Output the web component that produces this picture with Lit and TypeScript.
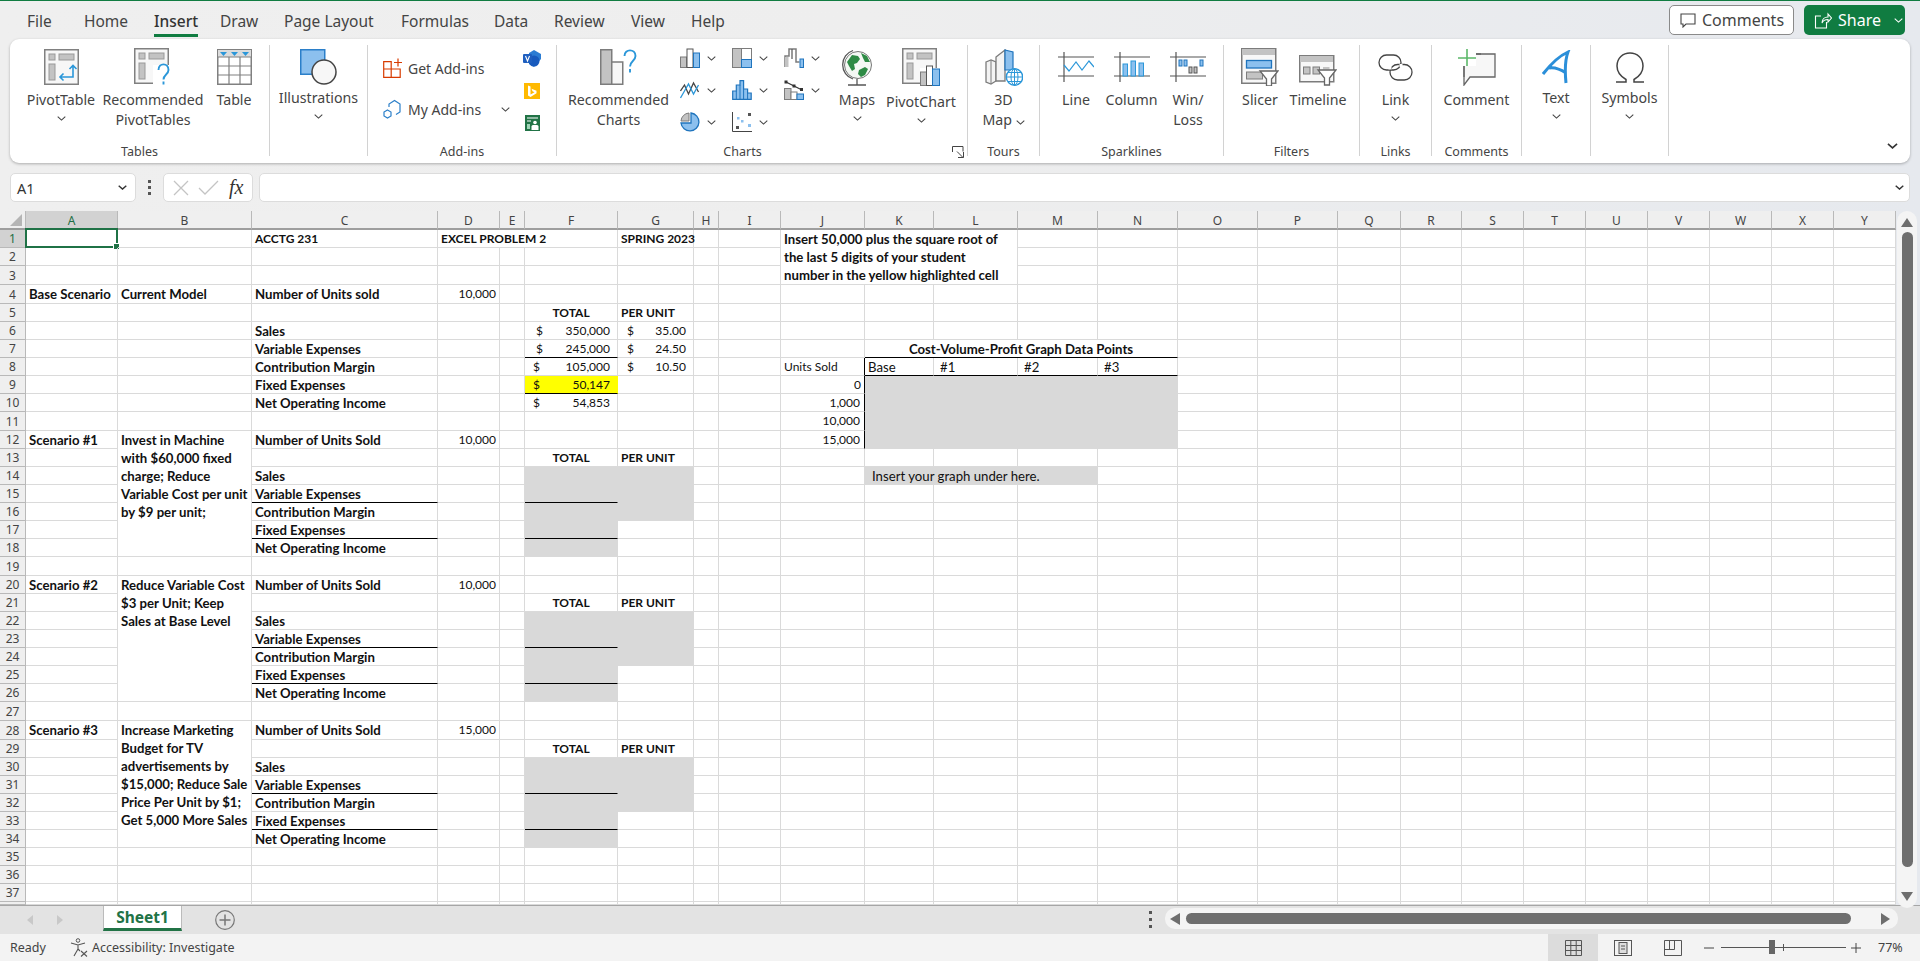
import { LitElement, html, svg, css, nothing } from 'lit';
import { customElement } from 'lit/decorators.js';

const GS = '#7c7c7c'; // icon grey stroke
const GF = '#c3c3c3'; // icon grey fill
const BS = '#1f74bd'; // icon blue stroke
const BF = '#8cc0ee'; // icon light blue

const chev = () => html`<svg class="chev" width="9" height="5" viewBox="0 0 9 5"><path d="M.7.7l3.8 3.4L8.3.7" fill="none" stroke="#444" stroke-width="1.1"/></svg>`;

const pivotBase = () => svg`
  <rect x=".75" y=".75" width="33.5" height="34.5" fill="#f7f7f7" stroke="#808080" stroke-width="1.5"/>
  <rect x="5" y="5" width="6" height="6" fill="${GF}" stroke="#999"/>
  <rect x="15" y="5" width="15" height="6" fill="${GF}" stroke="#999"/>
  <rect x="5" y="15" width="6" height="16" fill="${GF}" stroke="#999"/>`;

const icons: Record<string, () => unknown> = {
  pivot: () => html`<svg width="35" height="36" viewBox="0 0 35 36">${pivotBase()}
    <path d="M29 17v11H16M25.5 20l3.5-3.5 3.5 3.5M19.5 24.5l-3.5 3.500 3.5 3.5" fill="none" stroke="#2b97d9" stroke-width="1.6"/></svg>`,
  recPivot: () => html`<svg width="38" height="38" viewBox="0 0 38 38">${pivotBase()}
    <rect x="19" y="17" width="19" height="21" fill="#fff"/>
    <path d="M24.5 22c0-7.5 10-7.5 10 0 0 4.5-5 4.5-5 9.5M29.5 33.5v3" fill="none" stroke="#2b97d9" stroke-width="1.9"/></svg>`,
  table: () => html`<svg width="35" height="36" viewBox="0 0 35 36">
    <rect x=".75" y=".75" width="33.5" height="34.5" fill="#fff" stroke="#808080" stroke-width="1.5"/>
    <rect x="1" y="1" width="33" height="7" fill="#dcdcdc"/>
    <path d="M1 8h33M1 17h33M1 26h33M12 8v27M23 8v27" stroke="#808080" stroke-width="1.2"/>
    <path d="M3 3h7l-3.5 4zM14 3h7l-3.5 4zM25 3h7l-3.5 4z" fill="#2b97d9"/></svg>`,
  shapes: () => html`<svg width="37" height="36" viewBox="0 0 37 36">
    <rect x=".75" y=".75" width="24" height="24.5" fill="#8cc0ee" stroke="#2b7fc9" stroke-width="1.5"/>
    <circle cx="24" cy="23" r="12" fill="#f7f7f7" stroke="#444" stroke-width="1.5"/></svg>`,
  getAddins: () => html`<svg width="20" height="20" viewBox="0 0 20 20">
    <path d="M.7 3.7h7.5v15.600H.7zM8.2 11h9v8.300h-9M.7 11h7.5" fill="none" stroke="#d83b01" stroke-width="1.2"/>
    <path d="M15 .5v8M11 4.5h8" stroke="#d83b01" stroke-width="1.2"/></svg>`,
  myAddins: () => html`<svg width="20" height="20" viewBox="0 0 20 20">
    <path d="M6 8V5l5.5-3.5L17 5v8l-4 2.500" fill="none" stroke="#2b7fc9" stroke-width="1.2"/>
    <path d="M4.5 11l3.500 2v4l-3.500 2L1 17v-4z" fill="none" stroke="#2b7fc9" stroke-width="1.2"/></svg>`,
  visio: () => html`<svg width="18" height="17" viewBox="0 0 18 17">
    <path d="M6 3l5-3 7 4v5l-7 8-5-3z" fill="#2b7cd3"/><circle cx="11" cy="11" r="5.5" fill="#185abd"/>
    <rect x="0" y="4" width="9" height="9" rx="1" fill="#1f5fbf"/><path d="M2.5 6l2 5 2-5" fill="none" stroke="#fff" stroke-width="1.1"/></svg>`,
  bing: () => html`<svg width="16" height="16" viewBox="0 0 16 16"><rect width="16" height="16" fill="#ffb900"/>
    <path d="M4 2.5l2.5 1v8l4-2.300-2-1-1-2.500 5 2v2.500L6.5 14 4 12.500z" fill="#fff"/></svg>`,
  people: () => html`<svg width="15" height="16" viewBox="0 0 15 16"><rect width="15" height="16" fill="#217346"/>
    <path d="M2 3h11M2 6h4" stroke="#fff" stroke-width="1.2"/><circle cx="10" cy="7.5" r="1.8" fill="#fff"/>
    <path d="M6.5 15v-3.500q0-1.500 1.500-1.500h4q1.500 0 1.500 1.500V15z" fill="#fff"/><path d="M2 9h3v5H2z" fill="#9fd5b7"/></svg>`,
  recCharts: () => html`<svg width="38" height="36" viewBox="0 0 38 36">
    <rect x=".75" y=".75" width="11" height="34.5" fill="${GF}" stroke="${GS}" stroke-width="1.5"/>
    <rect x="11.75" y="13" width="11" height="22.25" fill="#f7f7f7" stroke="${GS}" stroke-width="1.5"/>
    <path d="M24.5 7c0-7.5 11-7.5 11 0 0 5-5.5 5-5.5 10.500M30 20v3.500" fill="none" stroke="#2b97d9" stroke-width="1.9"/></svg>`,
  cCol: () => html`<svg width="20" height="20" viewBox="0 0 20 20">
    <rect x=".5" y="9" width="6" height="10.5" fill="${GF}" stroke="${GS}"/><rect x="7" y="1" width="6" height="18.5" fill="#fff" stroke="#555"/>
    <rect x="13.5" y="5" width="6" height="14.5" fill="${BF}" stroke="${BS}"/></svg>`,
  cLine: () => html`<svg width="20" height="20" viewBox="0 0 20 20">
    <path d="M.5 11l4-6 4 9 5-11 5 9" fill="none" stroke="#444" stroke-width="1.3"/>
    <path d="M.5 18l4-7 4-7 5 10 5-9" fill="none" stroke="#2b97d9" stroke-width="1.3"/></svg>`,
  cPie: () => html`<svg width="20" height="20" viewBox="0 0 20 20">
    <path d="M9 1A8.5 8.5 0 0 0 1 9h8z" fill="${GF}" stroke="${GS}"/>
    <path d="M11 1a9 9 0 1 1-10 10h10z" fill="${BF}" stroke="${BS}" stroke-width="1.3"/></svg>`,
  cTree: () => html`<svg width="20" height="20" viewBox="0 0 20 20">
    <rect x=".5" y=".5" width="9" height="19" fill="${GF}" stroke="${GS}"/><rect x="9.5" y=".5" width="10" height="11" fill="#fff" stroke="${GS}"/>
    <rect x="9.5" y="11.5" width="10" height="8" fill="${BF}" stroke="${BS}"/></svg>`,
  cHist: () => html`<svg width="20" height="20" viewBox="0 0 20 20">
    <path d="M.7 19.3V11h3.600V5H8V.7h3.600V9h4v4h3.600v6.300z" fill="${BF}" stroke="${BS}" stroke-width="1.2"/>
    <path d="M4.3 11v8M8 5v14M11.6 9v10M15.6 13v6" stroke="${BS}"/></svg>`,
  cScatter: () => html`<svg width="20" height="20" viewBox="0 0 20 20">
    <path d="M.5 0v19.5H20" fill="none" stroke="#444"/>
    <rect x="16" y="1" width="3" height="3" fill="#555"/><rect x="4" y="14" width="3" height="3" fill="#555"/>
    <rect x="5" y="5" width="2.5" height="2.5" fill="${BF}"/><rect x="9" y="8" width="2.5" height="2.5" fill="${BF}"/><rect x="16" y="12" width="3" height="3" fill="${BF}"/></svg>`,
  cWater: () => html`<svg width="20" height="20" viewBox="0 0 20 20">
    <path d="M1 19V8h4V1h7v13h3.5" fill="none" stroke="${GS}" stroke-width="1.5"/><path d="M8 1v10" stroke="#555" stroke-width="1.2"/>
    <rect x="16" y="11" width="3.5" height="8.5" fill="${BF}" stroke="${BS}"/><rect x="1" y="9" width="3.5" height="10" fill="${GF}"/></svg>`,
  cCombo: () => html`<svg width="20" height="20" viewBox="0 0 20 20">
    <rect x=".5" y="8.5" width="6.5" height="11" fill="${GF}" stroke="${GS}"/><rect x="7" y="12" width="6" height="7.5" fill="#fff" stroke="${GS}"/>
    <rect x="13" y="14" width="6.5" height="5.5" fill="${BF}" stroke="${BS}"/>
    <path d="M2 2l8 4 8 4" stroke="#333" fill="none" stroke-width="1.2"/><rect x=".5" y=".5" width="3" height="3" fill="#333"/><rect x="8.5" y="4.5" width="3" height="3" fill="#333"/><rect x="16" y="8" width="3" height="3" fill="#333"/></svg>`,
  globe: () => html`<svg width="30" height="37" viewBox="0 0 30 37">
    <path d="M11 1.5A15 15 0 0 0 11 30" fill="none" stroke="#555" stroke-width="1.3"/>
    <path d="M15 30v6M6 36h18" stroke="#555" stroke-width="1.3"/>
    <circle cx="16" cy="16" r="13.5" fill="#f4f8f4" stroke="#777" stroke-width="1"/>
    <path d="M5 13l5-7 6 1 2 3-3 4-3 1 1 5-3 2-3-5zM19 4l6 3 3 6-5 0-2-4zM17 21l6-3 3 2-3 6-4 2-3-3z" fill="#2e8b45"/></svg>`,
  pivotChart: () => html`<svg width="38" height="38" viewBox="0 0 38 38">${pivotBase()}
    <rect x="18" y="20" width="20" height="18" fill="#fff"/>
    <rect x="18.5" y="24" width="6" height="13.5" fill="${GF}" stroke="${GS}"/><rect x="24.5" y="18" width="6" height="19.5" fill="#fff" stroke="#555"/>
    <rect x="30.5" y="21" width="7" height="16.5" fill="${BF}" stroke="${BS}"/></svg>`,
  map3d: () => html`<svg width="38" height="37" viewBox="0 0 38 37">
    <path d="M1 13l5-2 5 2v19l-5 3-5-2z" fill="#f3f3f3" stroke="${GS}" stroke-width="1.3"/><path d="M6 11v24" stroke="${GS}"/>
    <path d="M11 8l9-7v31h-9z" fill="#f3f3f3" stroke="${GS}" stroke-width="1.3"/>
    <path d="M20 1l8 2v18h-8z" fill="${BF}" stroke="${BS}" stroke-width="1.2"/>
    <circle cx="29.5" cy="28" r="8.2" fill="#fff" stroke="#2b97d9" stroke-width="1.4"/>
    <path d="M21.5 28h16M23 23.5h13M23 32.5h13M29.5 20v16" stroke="#2b97d9"/><ellipse cx="29.5" cy="28" rx="3.5" ry="8" fill="none" stroke="#2b97d9"/></svg>`,
  spLine: () => html`<svg width="36" height="30" viewBox="0 0 36 30">
    <path d="M0 5h36M0 24h36M6 0v30" stroke="#555" stroke-width="1.2"/>
    <path d="M6 13l5 6 7-9 6 8 7-9 5 6" fill="none" stroke="#2b97d9" stroke-width="1.2"/></svg>`,
  spCol: () => html`<svg width="36" height="30" viewBox="0 0 36 30">
    <path d="M0 5h36M0 24h36M6 0v30" stroke="#555" stroke-width="1.2"/>
    <rect x="9" y="12" width="4.5" height="12" fill="${BF}" stroke="#2b97d9"/><rect x="17" y="9" width="4.5" height="15" fill="${BF}" stroke="#2b97d9"/><rect x="25" y="11" width="4.5" height="13" fill="${BF}" stroke="#2b97d9"/></svg>`,
  spWin: () => html`<svg width="36" height="30" viewBox="0 0 36 30">
    <path d="M0 5h36M0 24h36M6 0v30" stroke="#555" stroke-width="1.2"/>
    <rect x="9" y="8" width="3" height="6" fill="${BF}" stroke="${BS}"/><rect x="14" y="8" width="3" height="6" fill="${BF}" stroke="${BS}"/><rect x="30" y="8" width="3" height="6" fill="${BF}" stroke="${BS}"/>
    <rect x="19" y="15" width="3" height="6" fill="${GF}" stroke="#555"/><rect x="24" y="15" width="3" height="6" fill="${GF}" stroke="#555"/></svg>`,
  slicer: () => html`<svg width="38" height="38" viewBox="0 0 38 38">
    <rect x=".75" y=".75" width="34" height="34.5" fill="#f7f7f7" stroke="${GS}" stroke-width="1.5"/><rect x="1" y="1" width="33" height="6" fill="${GF}"/>
    <rect x="5.5" y="12.5" width="25" height="7.5" fill="${BF}" stroke="${BS}" stroke-width="1.3"/><rect x="5.5" y="24" width="16" height="7" fill="${GF}" stroke="${GS}"/>
    <path d="M19 23h18l-6.5 8v7h-5v-7z" fill="#fff" stroke="#666" stroke-width="1.3"/></svg>`,
  timeline: () => html`<svg width="38" height="31" viewBox="0 0 38 31" style="margin-top:7px">
    <rect x=".75" y=".75" width="34" height="26" fill="#f7f7f7" stroke="${GS}" stroke-width="1.5"/><rect x="1" y="1" width="33" height="6" fill="${GF}"/>
    <rect x="4.5" y="12" width="6.5" height="7" fill="${GF}" stroke="${GS}"/><rect x="14" y="12" width="6.5" height="7" fill="${GF}" stroke="${GS}"/><rect x="24" y="12" width="6.5" height="2.5" fill="${GF}"/>
    <path d="M19 15h18l-6.5 8v7h-5v-7z" fill="#fff" stroke="#666" stroke-width="1.3"/></svg>`,
  link: () => html`<svg width="35" height="27" viewBox="0 0 35 27">
    <rect x="1" y="1" width="22" height="15" rx="7.5" fill="none" stroke="#444" stroke-width="1.3"/>
    <rect x="12" y="10.5" width="22" height="15.500" rx="7.7" fill="none" stroke="#444" stroke-width="1.3"/>
    <path d="M12 12.5v3M23 10v3" stroke="#fff" stroke-width="3"/></svg>`,
  comment: () => html`<svg width="38" height="37" viewBox="0 0 38 37">
    <path d="M6 5h31v23H12l-6 8z" fill="#f7f7f7" stroke="#666" stroke-width="1.3"/>
    <rect x="0" y="0" width="18" height="17" fill="#fff"/>
    <path d="M9 0v17M0 9h18" stroke="#5cb86a" stroke-width="1.6"/>
    <path d="M18 5h5M6 17v11" stroke="#666" stroke-width="1.3"/></svg>`,
  textA: () => html`<svg width="29" height="35" viewBox="0 0 29 35">
    <path d="M1 24C8 15 17 6 26 2c-3 8-3 21-2 31M7 18c5-1 11 1 17 5" fill="none" stroke="#2b8fd9" stroke-width="3"/></svg>`,
  omega: () => html`<svg width="30" height="31" viewBox="0 0 30 31">
    <path d="M1 30h10v-2.5C5 24 2 19 2 14 2 6 8 1 15 1s13 5 13 13c0 5-3 10-9 13.500V30h10" fill="none" stroke="#444" stroke-width="1.5"/></svg>`,
};

interface Btn { w: number; icon: string; label: unknown; chev?: boolean; dy?: number }
interface Group { w: number; pad?: number; title: string; btns?: Btn[]; kind?: string }

const groups: Group[] = [
  { w: 260, pad: 14, title: 'Tables', btns: [
    { w: 74, icon: 'pivot', label: 'PivotTable', chev: true },
    { w: 110, icon: 'recPivot', label: html`Recommended<br>PivotTables` },
    { w: 52, icon: 'table', label: 'Table' },
  ] },
  { w: 98, title: '', btns: [{ w: 97, icon: 'shapes', label: 'Illustrations', chev: true, dy: -2 }] },
  { w: 189, title: 'Add-ins', kind: 'addins' },
  { w: 411, title: 'Charts', kind: 'charts' },
  { w: 72, title: 'Tours', btns: [{ w: 71, icon: 'map3d', label: html`3D<br>Map ${chev()}` }] },
  { w: 184, pad: 8, title: 'Sparklines', btns: [
    { w: 56, icon: 'spLine', label: 'Line' },
    { w: 55, icon: 'spCol', label: 'Column' },
    { w: 58, icon: 'spWin', label: html`Win/<br>Loss` },
  ] },
  { w: 136, pad: 6, title: 'Filters', btns: [
    { w: 60, icon: 'slicer', label: 'Slicer' },
    { w: 56, icon: 'timeline', label: 'Timeline' },
  ] },
  { w: 72, title: 'Links', btns: [{ w: 71, icon: 'link', label: 'Link', chev: true }] },
  { w: 90, title: 'Comments', btns: [{ w: 89, icon: 'comment', label: 'Comment' }] },
  { w: 69, title: '', btns: [{ w: 68, icon: 'textA', label: 'Text', chev: true, dy: -2 }] },
  { w: 78, title: '', btns: [{ w: 77, icon: 'omega', label: 'Symbols', chev: true, dy: -2 }] },
];

const tabs: [string, number][] = [
  ['File', 57], ['Home', 70], ['Insert', 66], ['Draw', 64], ['Page Layout', 117],
  ['Formulas', 93], ['Data', 60], ['Review', 77], ['View', 60], ['Help', 40],
];

const smallCharts = ['cCol', 'cTree', 'cWater', 'cLine', 'cHist', 'cCombo', 'cPie', 'cScatter'];

// sheet geometry, pixel position of each grid line
const colLines = [25, 117, 251, 437, 499, 524, 617, 693, 718, 780, 864, 933, 1017, 1097, 1177, 1257, 1337, 1400, 1461, 1523, 1585, 1647, 1709, 1771, 1833, 1895];
const rowLines = [229, 247, 265, 284, 303, 321, 339, 357, 375, 393, 411, 430, 448, 466, 484, 502, 520, 538, 556, 575, 593, 611, 629, 647, 665, 683, 701, 720, 739, 757, 775, 793, 811, 829, 847, 865, 883, 901, 904];
const colTemplate = colLines.map((x, i) => (i ? x - colLines[i - 1] : x + 1) + 'px').join(' ');
const rowTemplate = rowLines.map((y, i) => (i ? y - rowLines[i - 1] : y - 210) + 'px').join(' ');
const letters = 'ABCDEFGHIJKLMNOPQRSTUVWXY'.split('');

interface Cell { text?: unknown; cls?: string; cs?: number; rs?: number; money?: string }
const cells = new Map<string, Cell>();
const set = (ref: string, c: Cell) => cells.set(ref, { ...cells.get(ref), ...c, cls: [cells.get(ref)?.cls, c.cls].filter(Boolean).join(' ') });

set('C1', { text: 'ACCTG 231', cls: 'b cap' });
set('D1', { text: 'EXCEL PROBLEM 2', cls: 'b cap', cs: 3 });
set('G1', { text: 'SPRING 2023', cls: 'b cap' });
set('J1', { text: html`Insert 50,000 plus the square root of<br>the last 5 digits of your student<br>number in the yellow highlighted cell`, cls: 'b merged', cs: 3, rs: 3 });
set('A4', { text: 'Base Scenario', cls: 'b' });
set('B4', { text: 'Current Model', cls: 'b' });
set('C4', { text: 'Number of Units sold', cls: 'b' });
set('D4', { text: '10,000', cls: 'r cap' });
set('F5', { text: 'TOTAL', cls: 'b c cap' });
set('G5', { text: 'PER UNIT', cls: 'b cap' });
['Sales', 'Variable Expenses', 'Contribution Margin', 'Fixed Expenses', 'Net Operating Income'].forEach((t, i) => set('C' + (6 + i), { text: t, cls: 'b' }));
set('F6', { money: '350,000', cls: 'm-wide' });
set('F7', { money: '245,000', cls: 'm-wide ul' });
set('F8', { money: '105,000', cls: 'm-narrow' });
set('F9', { money: '50,147', cls: 'm-narrow yellow ul' });
set('F10', { money: '54,853', cls: 'm-narrow' });
set('G6', { money: '35.00', cls: 'm-g' });
set('G7', { money: '24.50', cls: 'm-g' });
set('G8', { money: '10.50', cls: 'm-g' });

const scenarios: [number, string, unknown, string][] = [
  [12, 'Scenario #1', html`Invest in Machine<br>with $60,000 fixed<br>charge; Reduce<br>Variable Cost per unit<br>by $9 per unit;`, '10,000'],
  [20, 'Scenario #2', html`Reduce Variable Cost<br>$3 per Unit; Keep<br>Sales at Base Level`, '10,000'],
  [28, 'Scenario #3', html`Increase Marketing<br>Budget for TV<br>advertisements by<br>$15,000; Reduce Sale<br>Price Per Unit by $1;<br>Get 5,000 More Sales`, '15,000'],
];
for (const [r, name, desc, units] of scenarios) {
  set('A' + r, { text: name, cls: 'b' });
  set('B' + r, { text: desc, cls: 'b merged', rs: 7 });
  set('C' + r, { text: 'Number of Units Sold', cls: 'b' });
  set('D' + r, { text: units, cls: 'r cap' });
  set('F' + (r + 1), { text: 'TOTAL', cls: 'b c cap' });
  set('G' + (r + 1), { text: 'PER UNIT', cls: 'b cap' });
  ['Sales', 'Variable Expenses', 'Contribution Margin', 'Fixed Expenses', 'Net Operating Income'].forEach((t, i) => {
    const row = r + 2 + i;
    set('C' + row, { text: t, cls: 'b' + (i === 1 || i === 3 ? ' ul' : '') });
    set('F' + row, { cls: 'gray' + (i === 1 || i === 3 ? ' ul' : '') });
    if (i < 3) set('G' + row, { cls: 'gray' });
  });
}

// data points table
set('K7', { text: 'Cost-Volume-Profit Graph Data Points', cls: 'b c ul', cs: 4 });
set('J8', { text: 'Units Sold', cls: 'ur cap' });
set('K8', { text: 'Base', cls: 'ul' });
set('L8', { text: '#1', cls: 'ul wide' });
set('M8', { text: '#2', cls: 'ul wide' });
set('N8', { text: '#3', cls: 'ul wide' });
['0', '1,000', '10,000', '15,000'].forEach((t, i) => {
  const row = 9 + i;
  set('J' + row, { text: t, cls: i === 0 ? 'r ur cap' : 'r ur cap inset' });
  ['K', 'L', 'M', 'N'].forEach((c) => set(c + row, { cls: 'gray' }));
});
set('K14', { text: 'Insert your graph under here.', cls: 'gray indent', cs: 3 });

// cells swallowed by a merge
const covered = new Set<string>();
cells.forEach((c, ref) => {
  const col = letters.indexOf(ref[0]);
  const row = +ref.slice(1);
  for (let y = 0; y < (c.rs ?? 1); y++) {
    for (let x = 0; x < (c.cs ?? 1); x++) {
      if (x || y) covered.add(letters[col + x] + (row + y));
    }
  }
});

@customElement('app-root')
export class AppRoot extends LitElement {
  static styles = css`
    :host {
      display: block;
      width: 1920px;
      height: 961px;
      overflow: hidden;
      font-family: "Noto Sans", sans-serif;
      color: #444;
      background: linear-gradient(90deg, #efefef 0%, #eeeeee 45%, #e6e9ee 100%);
    }
    .app { display: flex; flex-direction: column; height: 961px; }

    /* title strip */
    .titlebar { height: 38px; border-top: 1px solid #107c41; display: flex; align-items: flex-start; justify-content: space-between; }
    .tabs { display: flex; padding-left: 27px; }
    .tab { font-size: 15.5px; line-height: 40px; height: 35px; box-sizing: border-box; color: #444; white-space: nowrap; }
    .tab.on span { display: inline-block; height: 35px; border-bottom: 3px solid #107c41; box-sizing: border-box; font-weight: 500; color: #333; line-height: 39px; }
    .actions { display: flex; gap: 10px; padding: 4px 15px 0 0; }
    .cbtn, .sbtn { height: 30px; box-sizing: border-box; border-radius: 5px; display: flex; align-items: center; font-size: 16px; }
    .cbtn { width: 125px; background: #fff; border: 1px solid #8a8a8a; padding-left: 10px; gap: 6px; color: #444; }
    .sbtn { width: 101px; background: #107c41; color: #fff; padding-left: 10px; gap: 6px; }
    .sbtn .chev { margin-left: 7px; }
    .sbtn .chev path { stroke: #fff; }

    /* ribbon */
    .ribbon { margin: 0 10px; height: 124px; box-sizing: border-box; padding-top: 6px; background: #fff; border-radius: 9px; box-shadow: 0 1px 3px rgba(0, 0, 0, .28); display: flex; position: relative; }
    .group { height: 111px; box-sizing: border-box; border-right: 1px solid #d2d2d2; display: flex; flex-direction: column; flex: none; }
    .gbody { flex: 1; display: flex; min-height: 0; }
    .gtitle { height: 14px; line-height: 14px; font-size: 12.5px; text-align: center; margin-bottom: -3px; white-space: nowrap; color: #444; }
    .chartfoot { display: flex; align-items: center; }
    .chartfoot .gtitle { flex: 1; padding-right: 22px; }
    .launch { width: 16px; margin: 0 1px -3px 0; }
    .btn { display: flex; flex-direction: column; align-items: center; flex: none; }
    .ico { height: 44px; width: 100%; display: flex; align-items: center; justify-content: center; }
    .lbl { font-size: 14.2px; line-height: 20px; text-align: center; white-space: nowrap; color: #444; margin-top: 1px; }
    .lbl + .chev { margin-top: 6px; }
    .addmain { width: 155px; padding: 13px 0 0 15px; box-sizing: border-box; display: flex; flex-direction: column; gap: 21px; flex: none; }
    .addrow { display: flex; align-items: center; height: 20px; gap: 5px; font-size: 14px; white-space: nowrap; }
    .addrow .chev { margin-left: 15px; }
    .apps { display: flex; flex-direction: column; align-items: center; width: 18px; padding-top: 5px; gap: 16px; }
    .apps svg { display: block; }
    .minis { display: grid; grid-template-columns: repeat(3, 52px); grid-auto-rows: 26px; row-gap: 6px; flex: none; }
    .mini { display: flex; align-items: center; gap: 7px; }
    .collapse { position: absolute; left: 1877px; top: 104px; display: flex; }
    .collapse svg { width: 11px; height: 6px; }
    .collapse path { stroke: #333; stroke-width: 1.3; }

    /* formula bar */
    .fbar { height: 29px; margin: 10px 10px 9px; display: flex; align-items: stretch; }
    .box { background: #fff; border: 1px solid #dcdcdc; border-radius: 5px; box-sizing: border-box; display: flex; align-items: center; }
    .name { width: 126px; padding: 0 8px 0 6px; font-size: 14.5px; justify-content: space-between; color: #333; }
    .dots { width: 27px; display: flex; flex-direction: column; align-items: center; justify-content: center; gap: 3px; }
    .dots i { width: 3px; height: 3px; background: #555; display: block; }
    .fx { width: 90px; padding-left: 7px; gap: 7px; margin-right: 6px; }
    .fxglyph { font-family: "Liberation Serif", serif; font-style: italic; font-size: 20px; color: #333; margin-left: 3px; }
    .finput { flex: 1; justify-content: flex-end; padding-right: 5px; }
    .finput .chev path, .name .chev path { stroke: #333; stroke-width: 1.4; }

    /* sheet */
    .sheetwrap { height: 694px; display: flex; }
    .grid { display: grid; width: 1896px; height: 694px; overflow: hidden; background: #fff; font-family: Lato, "Noto Sans", sans-serif; font-size: 13.2px; color: #111; flex: none; }
    .h { background: #efefef; border-right: 1px solid #b9b9b9; border-bottom: 1px solid #b9b9b9; box-sizing: border-box; display: flex; align-items: center; justify-content: center; font-family: "Noto Sans", sans-serif; font-size: 12px; color: #444; overflow: hidden; }
    .h.colh { border-bottom: 2px solid #9e9e9e; padding-top: 1px; }
    .h.sel { background: #d2d2d2; color: #1e6f45; }
    .corner { position: relative; }
    .corner i { position: absolute; right: 3px; bottom: 2px; border-style: solid; border-width: 0 0 12px 12px; border-color: transparent transparent #b5b5b5 transparent; }
    .cell { border-right: 1px solid #dadada; border-bottom: 1px solid #dadada; box-sizing: border-box; white-space: nowrap; padding: 0 3px; display: flex; align-items: center; line-height: 18px; min-width: 0; position: relative; }
    .cell.b { font-weight: 700; }
    .cell.cap, .cell.money { font-size: 12px; }
    .cell.r { justify-content: flex-end; }
    .cell.c { justify-content: center; }
    .cell.merged { display: block; }
    .cell.gray { background: #d9d9d9; border-color: #d9d9d9; }
    .cell.yellow { background: #ffff00; border-right-color: #ffff00; }
    .cell.ul { border-bottom-color: #000; }
    .cell.ur { border-right-color: #000; }
    .cell.wide { padding-left: 6px; }
    .cell.inset { padding-right: 4px; }
    .cell.indent { padding-left: 7px; }
    .cell.money { justify-content: space-between; padding-right: 7px; }
    .cell.m-wide { padding-left: 11px; }
    .cell.m-narrow { padding-left: 8px; }
    .cell.m-g { padding-left: 9px; }
    .selbox { position: absolute; left: -1px; top: -2px; width: 93px; height: 20px; box-sizing: border-box; border: 2px solid #1f7246; pointer-events: none; }
    .selbox i { position: absolute; right: -4px; bottom: -4px; width: 5px; height: 5px; background: #1f7246; border: 1px solid #fff; }

    /* vertical scrollbar */
    .vs { width: 20px; margin: 0 0 0 1px; height: 697px; background: #f4f4f4; border-radius: 10px; display: flex; flex-direction: column; align-items: center; position: relative; z-index: 1; }
    .vs .thumb { width: 11px; height: 635px; background: #6e6e6e; border-radius: 6px; margin: 5px 0 25px; }

    /* sheet tabs */
    .tabbar { height: 29px; box-sizing: border-box; border-top: 1px solid #a6a6a6; background: #e3e3e3; display: flex; align-items: flex-start; position: relative; }
    .nav { width: 103px; box-sizing: border-box; display: flex; padding: 9px 0 0 27px; gap: 24px; flex: none; }
    .sheet1 { width: 79px; height: 25px; box-sizing: border-box; background: #fff; border-left: 1px solid #bbb; border-right: 1px solid #bbb; border-bottom: 3px solid #217346; color: #217346; font-weight: 700; font-size: 15.5px; text-align: center; line-height: 22px; flex: none; }
    .addsheet { margin: 4px 0 0 33px; }
    .dots2 { margin: 5px 0 0 912px; width: 6px; gap: 4px; display: flex; flex-direction: column; align-items: center; }
    .dots2 i { width: 3px; height: 3px; background: #555; display: block; }
    .hs { position: absolute; left: 1165px; top: 2px; width: 733px; height: 21px; background: #f4f4f4; border-radius: 10px; display: flex; align-items: center; }
    .hs .thumb { height: 11px; width: 665px; background: #6e6e6e; border-radius: 6px; margin: 0 0 0 6px; }

    /* status bar */
    .status { flex: 1; background: #f3f3f3; display: flex; align-items: stretch; font-size: 12.5px; color: #444; }
    .stxt { display: flex; align-items: center; }
    .ready { padding-left: 10px; width: 70px; box-sizing: border-box; }
    .acc { gap: 3px; }
    .views { margin-left: auto; display: flex; align-items: stretch; }
    .view { width: 50px; display: flex; align-items: center; justify-content: center; }
    .view.on { background: #dcdcdc; }
    .zoom { display: flex; align-items: center; width: 222px; box-sizing: border-box; padding-left: 6px; }
    .slider { width: 125px; height: 1px; background: #555; position: relative; margin: 0 5px 0 7px; }
    .slider b { position: absolute; left: 48px; top: -7px; width: 6px; height: 14px; background: #666; }
    .slider u { position: absolute; left: 62px; top: -3px; width: 1px; height: 7px; background: #555; }
    .pct { margin-left: 17px; font-size: 12.5px; }
  `;

  private renderBtn(b: Btn) {
    return html`<div class="btn" style="width:${b.w}px">
      <div class="ico">${icons[b.icon]()}</div>
      <div class="lbl" style=${b.dy ? `margin-top:${1 + b.dy}px` : ''}>${b.label}</div>
      ${b.chev ? chev() : nothing}
    </div>`;
  }

  private renderAddins() {
    return html`<div class="addmain">
        <div class="addrow">${icons.getAddins()}<span>Get Add-ins</span></div>
        <div class="addrow">${icons.myAddins()}<span>My Add-ins</span>${chev()}</div>
      </div>
      <div class="apps">${icons.visio()}${icons.bing()}${icons.people()}</div>`;
  }

  private renderCharts() {
    return html`
      ${this.renderBtn({ w: 123, icon: 'recCharts', label: html`Recommended<br>Charts` })}
      <div class="minis">${smallCharts.map((k) => html`<div class="mini">${icons[k]()}${chev()}</div>`)}</div>
      ${this.renderBtn({ w: 42, icon: 'globe', label: 'Maps', chev: true })}
      ${this.renderBtn({ w: 86, icon: 'pivotChart', label: 'PivotChart', chev: true, dy: 2 })}`;
  }

  private renderGroup(g: Group) {
    const body = g.kind === 'addins' ? this.renderAddins() : g.kind === 'charts' ? this.renderCharts() : g.btns!.map((b) => this.renderBtn(b));
    const foot = g.kind === 'charts'
      ? html`<div class="chartfoot"><div class="gtitle">${g.title}</div>
          <svg class="launch" width="12" height="12" viewBox="0 0 12 12"><path d="M.5 6V.5H11v5M5 5.5l6 6M6 11.5h5.5V6" fill="none" stroke="#444"/></svg></div>`
      : html`<div class="gtitle">${g.title || '\u00a0'}</div>`;
    return html`<div class="group" style="width:${g.w}px">
      <div class="gbody" style="padding-left:${g.pad ?? 0}px">${body}</div>${foot}
    </div>`;
  }

  private renderGrid() {
    const out: unknown[] = [html`<div class="h colh corner"><i></i></div>`];
    letters.forEach((l) => out.push(html`<div class="h colh ${l === 'A' ? 'sel' : ''}">${l}</div>`));
    for (let r = 1; r <= 38; r++) {
      out.push(html`<div class="h ${r === 1 ? 'sel' : ''}">${r < 38 ? r : ''}</div>`);
      for (const l of letters) {
        const ref = l + r;
        if (covered.has(ref)) continue;
        const c = cells.get(ref);
        if (!c) {
          out.push(html`<div class="cell">${ref === 'A1' ? html`<div class="selbox"><i></i></div>` : nothing}</div>`);
          continue;
        }
        const span = (c.cs ? `grid-column:span ${c.cs};` : '') + (c.rs ? `grid-row:span ${c.rs};` : '');
        out.push(html`<div class="cell ${c.cls ?? ''} ${c.money ? 'money' : ''}" style=${span}>
          ${c.money ? html`<span>$</span><span>${c.money}</span>` : c.text ?? nothing}
        </div>`);
      }
    }
    return out;
  }

  render() {
    return html`<div class="app">
      <div class="titlebar">
        <div class="tabs">
          ${tabs.map(([t, w]) => html`<div class="tab ${t === 'Insert' ? 'on' : ''}" style="width:${w}px"><span>${t}</span></div>`)}
        </div>
        <div class="actions">
          <div class="cbtn"><svg width="16" height="15" viewBox="0 0 16 15"><path d="M1 1h14v10H6l-3 3v-3H1z" fill="none" stroke="#444" stroke-width="1.1"/></svg>Comments</div>
          <div class="sbtn"><svg width="18" height="17" viewBox="0 0 18 17"><path d="M7 4H1.5v12h11v-6M8 11c0-4 3-6 6-6V2l3.500 4L14 10V7.500c-3 0-5 1-6 3.500z" fill="none" stroke="#fff" stroke-width="1.1"/></svg>Share${chev()}</div>
        </div>
      </div>

      <div class="ribbon">
        ${groups.map((g) => this.renderGroup(g))}
        <div class="collapse">${chev()}</div>
      </div>

      <div class="fbar">
        <div class="box name"><span>A1</span>${chev()}</div>
        <div class="dots"><i></i><i></i><i></i></div>
        <div class="box fx">
          <svg width="20" height="20" viewBox="0 0 20 20"><path d="M3 3l14 14M17 3L3 17" stroke="#c4c4c4" stroke-width="1.3"/></svg>
          <svg width="21" height="20" viewBox="0 0 21 20"><path d="M1 10l6 6L20 3" fill="none" stroke="#c4c4c4" stroke-width="1.3"/></svg>
          <span class="fxglyph">fx</span>
        </div>
        <div class="box finput">${chev()}</div>
      </div>

      <div class="sheetwrap">
        <div class="grid" style="grid-template-columns:${colTemplate};grid-template-rows:${rowTemplate}">${this.renderGrid()}</div>
        <div class="vs">
          <svg style="margin-top:7px" width="12" height="9" viewBox="0 0 12 9"><path d="M6 0l6 9H0z" fill="#6e6e6e"/></svg>
          <div class="thumb"></div>
          <svg width="12" height="9" viewBox="0 0 12 9"><path d="M6 9L0 0h12z" fill="#6e6e6e"/></svg>
        </div>
      </div>

      <div class="tabbar">
        <div class="nav">
          <svg width="6" height="10" viewBox="0 0 6 10"><path d="M6 0v10L0 5z" fill="#c8c8c8"/></svg>
          <svg width="6" height="10" viewBox="0 0 6 10"><path d="M0 0v10l6-5z" fill="#c8c8c8"/></svg>
        </div>
        <div class="sheet1">Sheet1</div>
        <svg class="addsheet" width="20" height="20" viewBox="0 0 20 20"><circle cx="10" cy="10" r="9.3" fill="none" stroke="#777" stroke-width="1.2"/><path d="M10 4.5v11M4.5 10h11" stroke="#777" stroke-width="1.5"/></svg>
        <div class="dots2"><i></i><i></i><i></i></div>
        <div class="hs">
          <svg style="margin-left:5px" width="10" height="12" viewBox="0 0 10 12"><path d="M0 6l10-6v12z" fill="#6e6e6e"/></svg>
          <div class="thumb"></div>
          <svg style="margin-left:30px" width="9" height="12" viewBox="0 0 9 12"><path d="M9 6L0 0v12z" fill="#6e6e6e"/></svg>
        </div>
      </div>

      <div class="status">
        <div class="stxt ready">Ready</div>
        <div class="stxt acc">
          <svg width="19" height="19" viewBox="0 0 19 19"><circle cx="8" cy="2.5" r="1.8" fill="none" stroke="#555"/><path d="M1 5l7 2 7-2M8 7v4M8 11l-4 7M8 11l2 2" fill="none" stroke="#555" stroke-width="1.1"/><path d="M11 13l6 5.500M17 13l-6 5.500" stroke="#555" stroke-width="1.1"/></svg>
          <span>Accessibility: Investigate</span>
        </div>
        <div class="views">
          <div class="view on"><svg width="17" height="16" viewBox="0 0 17 16"><path d="M.5.5h16v15H.5zM5.8.5v15M11.200.5v15M.5 5.5h16M.5 10.500h16" fill="none" stroke="#555"/></svg></div>
          <div class="view"><svg width="18" height="16" viewBox="0 0 18 16"><rect x=".5" y=".5" width="17" height="15" fill="none" stroke="#555"/><rect x="5" y="2.5" width="8" height="11" fill="#ddd" stroke="#555"/><path d="M7 6h4M7 9h4" stroke="#555"/></svg></div>
          <div class="view"><svg width="18" height="16" viewBox="0 0 18 16"><path d="M.5.5h17v15H.5zM.5 9.500h10V.5M5.500.5v9" fill="none" stroke="#555"/></svg></div>
        </div>
        <div class="zoom">
          <svg width="10" height="2" viewBox="0 0 10 2"><path d="M0 1h10" stroke="#444"/></svg>
          <div class="slider"><b></b><u></u></div>
          <svg width="10" height="10" viewBox="0 0 10 10"><path d="M0 5h10M5 0v10" stroke="#444"/></svg>
          <span class="pct">77%</span>
        </div>
      </div>
    </div>`;
  }
}
